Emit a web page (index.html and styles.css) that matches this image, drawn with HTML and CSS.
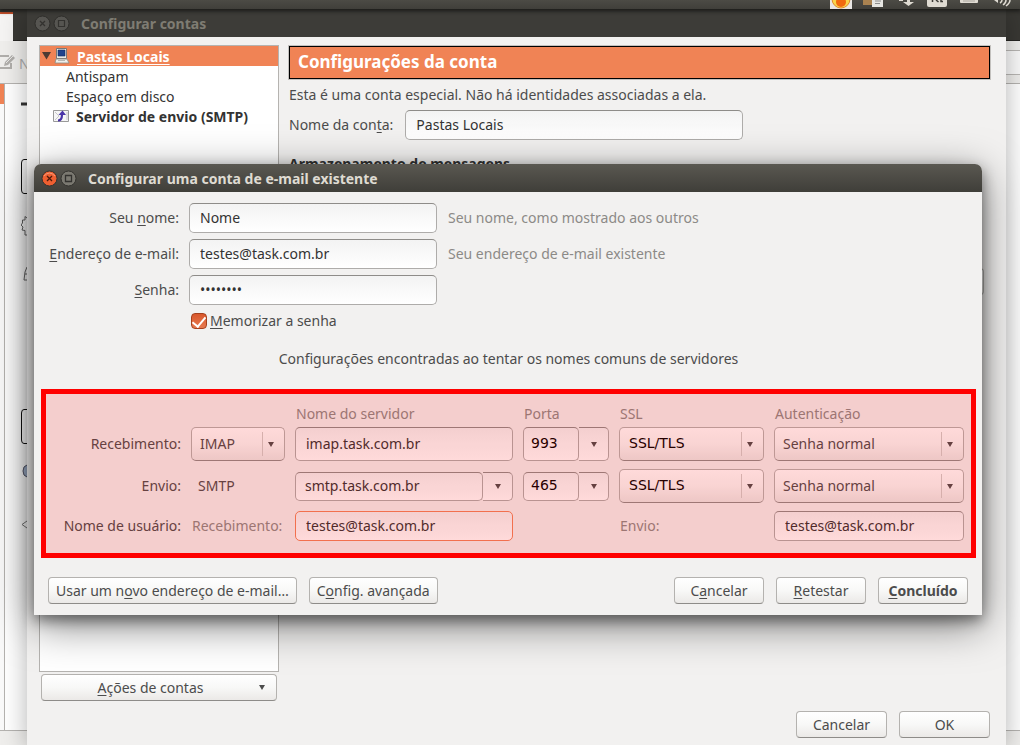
FILE: index.html
```html
<!DOCTYPE html>
<html lang="pt-BR">
<head>
<meta charset="utf-8">
<title>Configurar contas</title>
<link rel="stylesheet" href="styles.css">
</head>
<body>
<div class="desktop">
  <header class="panel">
    <svg width="22" height="9" viewBox="0 0 22 9"><rect width="22" height="9" fill="#e8e6e3"/><circle cx="11" cy="-1" r="9" fill="#f9d54a" stroke="#e08a2a"/><circle cx="11" cy="2" r="5" fill="#f0690f"/></svg>
    <svg width="20" height="9" viewBox="0 0 20 9"><path d="M0 0h11v5H0z" fill="#a98250"/><path d="M9 0h11v7H9z" fill="#e6e6e2"/><path d="M12 1h6M12 3.500h5" stroke="#8d8d8d"/></svg>
    <svg width="21" height="9" viewBox="0 0 21 9"><path d="M5 0h4v1H5zM13 0h3v2h4l-5.500 4L9 2h4z" fill="#dfdbd2"/></svg>
    <svg width="21" height="9" viewBox="0 0 21 9"><path d="M1 0h20v5q0 2-2 2H3q-2 0-2-2z" fill="#dfdbd2"/><path d="M6.500 0v2M10 0l2.500 2M15 0v1.500h2" stroke="#3c3b37" stroke-width="1.500" fill="none"/></svg>
    <svg width="20" height="9" viewBox="0 0 20 9"><path d="M2 0h18v2q0 1-1 1H3Q2 3 2 2z" fill="#dfdbd2"/><path d="M5 1h12" stroke="#8b8880" stroke-width=".6"/></svg>
    <svg width="22" height="9" viewBox="0 0 22 9"><path d="M5 0h4v3z" fill="#dfdbd2"/><path d="M13 0q0 2-2 3M17 0q0 3-3 5M21 0q0 3-4 6" stroke="#dfdbd2" stroke-width="1.500" fill="none"/></svg>
  </header>

  <div class="browser">
    <div class="browser-tabs"><span class="browser-tab"></span></div>
    <div class="browser-tools">
      <span class="compose">
        <svg width="16" height="16" viewBox="0 0 16 16"><path d="M9 2H-1v12h12V9" fill="none" stroke="#b0aeab" stroke-width="2"/><path d="M5 8l7-7 3 3-7 7-4 1z" fill="#b0aeab"/><path d="M6 9l7-7" stroke="#e9e8e6"/></svg>
        <span>N</span>
      </span>
      <span class="browser-search"></span>
    </div>
    <div class="browser-page">
      <span class="browser-folders"></span>
      <svg class="browser-marks" width="6" height="450" viewBox="0 0 6 450">
        <path d="M0 20h6" stroke="#333" stroke-width="3"/>
        <path d="M6 75.500H3Q.500 75.500.500 79v27q0 3.500 2.500 3.500h3M6 325.500H3Q.500 325.500.500 329v27q0 3.500 2.500 3.500h3" fill="none" stroke="#111"/>
        <path d="M6 134L4 132.500v3.500L1.500 136v3l-1.500 2 2 2-1 3 3 .5v4.500h2" fill="none" stroke="#666"/>
        <path d="M6 183l-2 5-1 8h3M4 190h2" fill="none" stroke="#666"/>
        <path d="M6 381q-4 1-4 6t4 6" fill="#9fb0cb" stroke="#556"/>
        <path d="M6 437l-5 3.500 5 3.500" fill="none" stroke="#777"/>
      </svg>
    </div>
    <div class="browser-status"></div>
  </div>

  <section class="window accounts" aria-label="Configurar contas">
    <div class="titlebar">
      <button class="wbtn" aria-label="Fechar"><svg width="17" height="17" viewBox="0 0 17 17"><circle cx="8.500" cy="8.500" r="7.500" fill="#565551" stroke="#2f2e2b"/><path d="M6 6l5 5M11 6l-5 5" stroke="#33322f" stroke-width="1.300"/></svg></button>
      <button class="wbtn" aria-label="Maximizar"><svg width="17" height="17" viewBox="0 0 17 17"><circle cx="8.500" cy="8.500" r="7.500" fill="#565551" stroke="#2f2e2b"/><path d="M5.500 5.500h6v6h-6z" fill="none" stroke="#33322f" stroke-width="1.200"/></svg></button>
      <h2>Configurar contas</h2>
    </div>
    <div class="accounts-body">
      <aside class="side">
        <ul class="tree">
          <li class="selected">
            <svg class="twisty" width="9" height="8" viewBox="0 0 9 8"><path d="M0 0h9L4.500 7.500z" fill="#4c3a33"/></svg>
            <svg width="16" height="16" viewBox="0 0 16 16"><path d="M2.500.500h10v10h-10z" fill="#e9e9e4" stroke="#777"/><path d="M4 2h7v6H4z" fill="#20438d" stroke="#122a5e" stroke-width=".6"/><path d="M2 11h11l2 4H1z" fill="#efefea" stroke="#8b8b86" stroke-width=".8"/><path d="M4 12.500h7" stroke="#b7b7b2"/></svg>
            <a href="#pastas">Pastas Locais</a>
          </li>
          <li class="leaf"><a href="#antispam">Antispam</a></li>
          <li class="leaf"><a href="#espaco">Espaço em disco</a></li>
          <li class="server">
            <svg width="16" height="14" viewBox="0 0 16 14"><path d="M.500 1.500h15v11H.500z" fill="#f6f6f6" stroke="#999"/><path d="M2 3l4 4-4 4M14 3v8" fill="none" stroke="#c8c8c8"/><path d="M5 11.500q4 0 4-6" fill="none" stroke="#4a35a8" stroke-width="2.200"/><path d="M5.500 6L9.500 1.500 13 6z" fill="#4a35a8"/></svg>
            <a href="#smtp">Servidor de envio (SMTP)</a>
          </li>
        </ul>
        <button class="btn actions"><span><u>A</u>ções de contas</span></button>
      </aside>
      <div class="main">
        <h1>Configurações da conta</h1>
        <p>Esta é uma conta especial. Não há identidades associadas a ela.</p>
        <div class="field">
          <label for="account">Nome da con<u>t</u>a:</label>
          <input class="input account-name" id="account" type="text" value="Pastas Locais">
        </div>
        <h3>Armazenamento de mensagens</h3>
        <button class="btn browse" aria-label="Procurar"></button>
        <div class="footer">
          <button class="btn">Cancelar</button>
          <button class="btn">OK</button>
        </div>
      </div>
    </div>
  </section>

  <section class="window dialog" role="dialog" aria-label="Configurar uma conta de e-mail existente">
    <div class="titlebar">
      <button class="wbtn" aria-label="Fechar"><svg width="17" height="17" viewBox="0 0 17 17"><circle cx="8.500" cy="8.500" r="7.500" fill="#ee5f31" stroke="#33322e"/><path d="M3 6q5.500-6 11 0" fill="none" stroke="#f59a78"/><path d="M6 6l5 5M11 6l-5 5" stroke="#4b1a0c" stroke-width="1.300"/></svg></button>
      <button class="wbtn" aria-label="Maximizar"><svg width="17" height="17" viewBox="0 0 17 17"><circle cx="8.500" cy="8.500" r="7.500" fill="#7b7971" stroke="#33322e"/><path d="M5.500 5.500h6v6h-6z" fill="none" stroke="#33322f" stroke-width="1.300"/></svg></button>
      <h2>Configurar uma conta de e-mail existente</h2>
    </div>
    <form class="dialog-body">
      <div class="identity">
        <label for="name">Seu <u>n</u>ome:</label>
        <input class="input" id="name" type="text" value="Nome">
        <span class="hint">Seu nome, como mostrado aos outros</span>
        <label for="email"><u>E</u>ndereço de e-mail:</label>
        <input class="input" id="email" type="text" value="testes@task.com.br">
        <span class="hint">Seu endereço de e-mail existente</span>
        <label for="pass"><u>S</u>enha:</label>
        <input class="input" id="pass" type="password" value="12345678">
      </div>
      <div class="remember">
        <input type="checkbox" id="remember" checked>
        <label for="remember"><u>M</u>emorizar a senha</label>
      </div>
      <p class="status">Configurações encontradas ao tentar os nomes comuns de servidores</p>

      <div class="servers">
        <span class="hint col-host">Nome do servidor</span>
        <span class="hint">Porta</span>
        <span class="hint">SSL</span>
        <span class="hint">Autenticação</span>

        <label for="proto">Recebimento:</label>
        <div class="select"><select id="proto"><option>IMAP</option></select></div>
        <input class="input tall" type="text" aria-label="Servidor de recebimento" value="imap.task.com.br">
        <div class="combo tall"><input class="input port" type="text" aria-label="Porta de recebimento" value="993"><button type="button" aria-label="Portas"></button></div>
        <div class="select over"><select aria-label="SSL de recebimento"><option>SSL/TLS</option></select></div>
        <div class="select"><select aria-label="Autenticação de recebimento"><option>Senha normal</option></select></div>

        <span class="name">Envio:</span>
        <span class="proto">SMTP</span>
        <div class="combo"><input class="input" type="text" aria-label="Servidor de envio" value="smtp.task.com.br"><button type="button" aria-label="Servidores"></button></div>
        <div class="combo"><input class="input port" type="text" aria-label="Porta de envio" value="465"><button type="button" aria-label="Portas"></button></div>
        <div class="select over"><select aria-label="SSL de envio"><option>SSL/TLS</option></select></div>
        <div class="select"><select aria-label="Autenticação de envio"><option>Senha normal</option></select></div>

        <span class="name">Nome de usuário:</span>
        <label class="hint" for="user-in">Recebimento:</label>
        <input class="input focused" id="user-in" type="text" value="testes@task.com.br">
        <label class="hint col-ssl" for="user-out">Envio:</label>
        <input class="input" id="user-out" type="text" value="testes@task.com.br">
      </div>

      <div class="buttons">
        <button type="button" class="btn">Usar um n<u>o</u>vo endereço de e-mail…</button>
        <button type="button" class="btn">C<u>o</u>nfig. avançada</button>
        <span class="spacer"></span>
        <button type="button" class="btn">C<u>a</u>ncelar</button>
        <button type="button" class="btn"><u>R</u>etestar</button>
        <button type="button" class="btn default"><u>C</u>oncluído</button>
      </div>
    </form>
  </section>
</div>
</body>
</html>
```
FILE: styles.css
```css
* { box-sizing: border-box; }
body {
  margin: 0;
  font-family: "Noto Sans", "Open Sans", sans-serif;
  font-size: 14px;
  line-height: 20px;
  color: #4c4c4c;
}
h1, h2, h3, p, ul { margin: 0; padding: 0; }
button, input, select { font: inherit; color: inherit; margin: 0; }
svg { display: block; flex: none; }
u { text-decoration: underline; text-underline-offset: 2px; }
a { color: inherit; text-decoration: none; }

.desktop {
  position: relative;
  display: flex;
  flex-direction: column;
  height: 100vh;
  overflow: hidden;
  background: #f2f1f0;
}
.panel {
  position: relative;
  z-index: 3;
  display: flex;
  justify-content: flex-end;
  gap: 11px;
  height: 9px;
  padding-right: 9px;
  background: linear-gradient(#4c4b45, #403f3a);
  box-shadow: 0 1px 4px 1px #181816;
}

/* Mail window at the back */
.browser { display: flex; flex: 1; flex-direction: column; }
.browser-tabs { height: 32px; padding-top: 3px; background: #393834; border-bottom: 1px solid #262522; }
.browser-tab { display: block; width: 13px; height: 29px; background: #f5f4f3; border-top: 2px solid #d2542c; }
.browser-tools {
  display: flex;
  justify-content: space-between;
  height: 43px;
  padding-top: 9px;
  background: #efeeec;
  border-bottom: 1px solid #b5b3b0;
}
.compose { display: flex; gap: 3px; padding-top: 4px; color: #aaa; }
.browser-search { width: 40px; height: 25px; background: #fafafa; border: solid #b9b7b4; border-width: 1px 0; }
.browser-page { display: flex; flex: 1; gap: 16px; background: #fff; }
.browser-folders { width: 5px; border-right: 1px solid #b5b3b0; background: linear-gradient(#f08355 0 20px, #fafafa 20px); }
.browser-status { height: 15px; background: #efeeec; border-top: 1px solid #b5b3b0; }

/* Windows */
.window { position: absolute; display: flex; flex-direction: column; background: #f2f1f0; }
.titlebar { display: flex; flex: none; align-items: center; gap: 2px; height: 28px; padding-left: 7px; }
.titlebar h2 { padding: 1px 0 0 9px; font-size: 14px; line-height: 20px; font-weight: bold; }
.wbtn { padding: 0; border: 0; background: none; }

.accounts { top: 9px; right: 14px; bottom: 0; left: 27px; box-shadow: 0 4px 24px rgba(0, 0, 0, .3); }
.accounts .titlebar { background: #3d3c38; color: #7f7c73; }
.accounts-body { display: flex; flex: 1; gap: 10px; padding: 8px 16px 7px 12px; }
.side { display: flex; flex-direction: column; gap: 2px; width: 240px; padding-bottom: 37px; }
.tree { flex: 1; list-style: none; background: #fff; border: 1px solid #b5b3b0; color: #333; }
.tree li { display: flex; align-items: center; height: 20px; }
.tree a { padding-top: 2px; }
.tree .selected { gap: 3px; padding-left: 2px; background: #f08355; color: #fff; font-weight: bold; }
.selected a { padding-left: 4px; text-decoration: underline; text-underline-offset: 2px; }
.leaf { padding-left: 26px; }
.server { gap: 7px; padding-left: 13px; font-weight: bold; }
.main { display: flex; flex: 1; flex-direction: column; align-items: flex-start; }
.main h1 {
  width: 100%;
  padding: 5px 8px 6px;
  background: #f08355;
  border: 1px solid #000;
  outline: 1px solid #c3c1be;
  color: #fff;
  font-size: 17px;
  line-height: 20px;
  margin: 1px 0 6px;
}
.field { display: flex; align-items: center; gap: 12px; margin-top: 5px; }
.main h3 { margin-top: 14px; font-size: 14px; line-height: 20px; color: #333; }
.browse { align-self: flex-end; width: 91px; margin: 94px 6px 0 0; }
.footer { display: flex; align-self: flex-end; gap: 12px; margin-top: auto; }
.footer .btn { width: 91px; }

.btn {
  height: 27px;
  padding: 0 7px;
  border: 1px solid #b4b2af;
  border-bottom-color: #8e8c89;
  border-radius: 4px;
  background: linear-gradient(#fff, #f8f8f7 50%, #ebe9e7);
  white-space: nowrap;
}
.actions { display: flex; align-items: center; margin: 0 2px; padding: 0 11px 0 0; }
.actions span { flex: 1; }
.actions::after, .select::after, .combo button::after {
  content: "";
  border: solid transparent;
  border-width: 5px 3px 0;
  border-top-color: #4c4c4c;
}
.input {
  width: 100%;
  min-width: 0;
  height: 30px;
  padding: 0 10px 2px;
  border: 1px solid #aeacaa;
  border-top-color: #8e8c89;
  border-radius: 5px;
  background: linear-gradient(#f3f3f3, #fff);
  color: #333;
}
.main .account-name { width: 338px; }

.dialog {
  top: 164px;
  right: 38px;
  left: 34px;
  border-radius: 7px 7px 0 0;
  box-shadow: 0 5px 14px rgba(0, 0, 0, .45), 0 10px 42px rgba(0, 0, 0, .5);
}
.dialog .titlebar { border-radius: 7px 7px 0 0; background: linear-gradient(#5a5851, #3f3e39); color: #dfdbd2; }
.dialog-body { display: flex; flex-direction: column; padding: 11px 6px 11px 7px; }
.identity {
  display: grid;
  grid-template-columns: 138px 248px 1fr;
  align-items: center;
  gap: 6px 10px;
}
.identity label { text-align: right; white-space: nowrap; }
.hint { color: #8c8a87; }
.identity .hint { padding-left: 1px; }
.remember { display: flex; align-items: center; gap: 3px; margin: 6px 0 0 150px; }
.remember input {
  appearance: none;
  display: flex;
  justify-content: center;
  width: 16px;
  height: 16px;
  border: 1px solid #a5401d;
  border-radius: 4px;
  background: linear-gradient(#d9572c, #e77a50);
}
.remember input:checked::before {
  content: "";
  width: 6px;
  height: 11px;
  border: solid #fff;
  border-width: 0 2px 2px 0;
  transform: rotate(40deg);
}
.status { margin-top: 18px; text-align: center; }

.servers {
  position: relative;
  display: grid;
  grid-template-columns: 135px 94px 1fr 86px 145px 190px;
  grid-template-rows: 26px 34px 50px 30px;
  align-items: center;
  column-gap: 10px;
  margin-top: 20px;
  padding: 7px 7px 12px 0;
  border: 5px solid #f00;
}
.servers::after {
  content: "";
  position: absolute;
  inset: 0;
  background: rgba(255, 0, 0, .145);
  pointer-events: none;
}
.servers > label, .servers > .name { text-align: right; }
.servers > .hint { text-align: left; padding-left: 1px; white-space: nowrap; }
.col-host { grid-column: 3; }
.servers > .col-ssl { grid-column: 5; }
.proto { padding-left: 7px; }
.select { position: relative; display: flex; align-items: center; }
.select select {
  appearance: none;
  width: 100%;
  height: 34px;
  padding: 0 30px 0 8px;
  border: 1px solid #b4b2af;
  border-bottom-color: #8e8c89;
  border-radius: 5px;
  background: linear-gradient(#fff, #f8f8f7 50%, #ebe9e7);
}
.select::before { content: ""; position: absolute; top: 5px; right: 22px; bottom: 5px; border-left: 1px solid #cfcdca; }
.select::after { position: absolute; right: 11px; pointer-events: none; }
.over select, .servers .port { color: #000; font-family: "DejaVu Sans", sans-serif; }
.over select { padding: 0 30px 2px 9px; }
.combo { display: flex; height: 29px; }
.combo .input { flex: 1; height: 100%; padding: 0 9px 2px; }
.servers .port { padding: 0 7px 2px; }
.input.tall, .combo.tall { height: 34px; }
.combo button {
  display: grid;
  place-items: center;
  width: 30px;
  padding: 0;
  border: 1px solid #aeacaa;
  border-top-color: #8e8c89;
  border-left: 0;
  border-radius: 0 5px 5px 0;
  background: linear-gradient(#f3f3f3, #fff);
}
.servers .focused { border-color: #f0845c; }

.buttons { display: flex; gap: 12px; margin-top: 19px; padding: 0 8px 0 7px; }
.buttons .btn { min-width: 90px; }
.default { font-weight: bold; }
.spacer { flex: 1; }
```
